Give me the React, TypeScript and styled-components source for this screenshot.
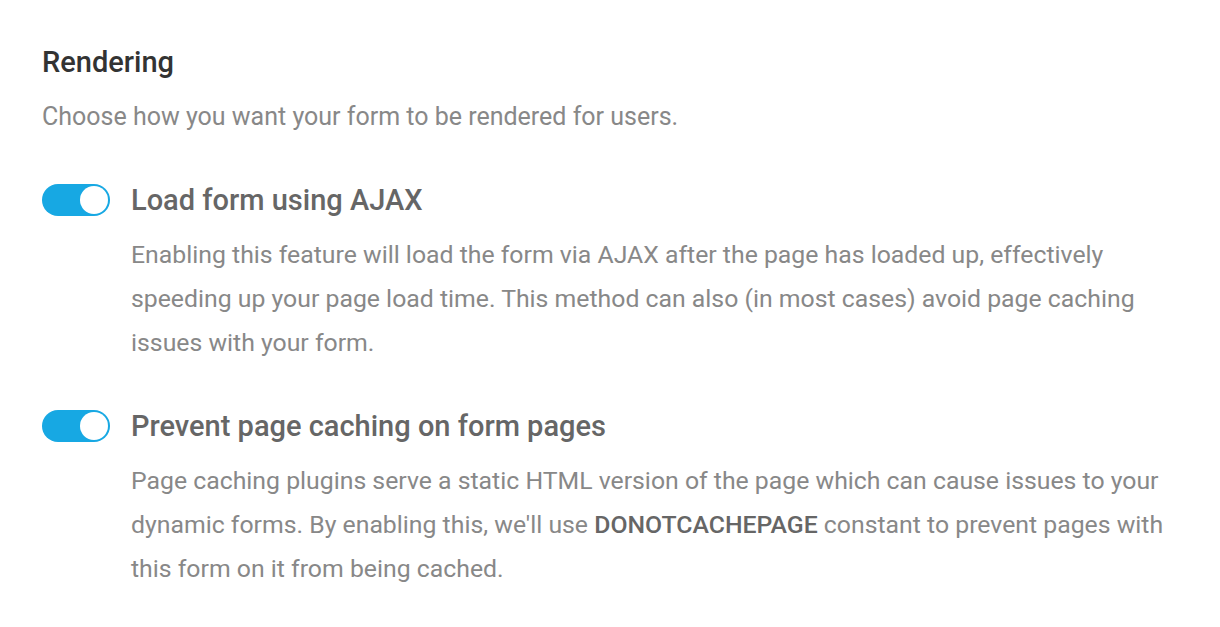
import React from "react";
import styled, { createGlobalStyle } from "styled-components";

const Global = createGlobalStyle`
  html, body { margin: 0; padding: 0; background: #ffffff; }
  body { font-family: Roboto, "Noto Sans", Arial, sans-serif; -webkit-font-smoothing: antialiased; }
`;

const Page = styled.div`
  padding: 44px 42px 40px 42px;
  display: flex;
  flex-direction: column;
`;

const Heading = styled.h2`
  margin: 0;
  font-size: 29px;
  line-height: 36px;
  font-weight: 500;
  color: #333333;
`;

const Subtitle = styled.p`
  margin: 21px 0 0 0;
  font-size: 25px;
  line-height: 32px;
  color: #888888;
`;

const Options = styled.div`
  display: flex;
  flex-direction: column;
  gap: 45px;
  margin-top: 51px;
`;

const Option = styled.div`
  display: flex;
  gap: 21px;
  align-items: flex-start;
`;

const Track = styled.span<{ $on: boolean }>`
  position: relative;
  flex: none;
  width: 68px;
  height: 32px;
  border-radius: 16px;
  background: ${(p) => (p.$on ? "#17a8e3" : "#cccccc")};
`;

const Knob = styled.span<{ $on: boolean }>`
  position: absolute;
  top: 2px;
  left: ${(p) => (p.$on ? "38px" : "2px")};
  width: 28px;
  height: 28px;
  border-radius: 50%;
  background: #ffffff;
`;

const Body = styled.div`
  flex: 1;
  display: flex;
  flex-direction: column;
`;

const Title = styled.div`
  font-size: 29px;
  line-height: 32px;
  font-weight: 500;
  color: #666666;
`;

const Desc = styled.p`
  margin: 17px 0 0 0;
  font-size: 24.8px;
  line-height: 44px;
  color: #888888;

  strong {
    font-weight: 500;
    color: #666666;
  }
`;

const Toggle = ({ on }: { on: boolean }) => (
  <Track $on={on} role="switch" aria-checked={on}>
    <Knob $on={on} />
  </Track>
);

export default function App() {
  return (
    <>
      <Global />
      <Page>
        <Heading>Rendering</Heading>
        <Subtitle>Choose how you want your form to be rendered for users.</Subtitle>
        <Options>
          <Option>
            <Toggle on />
            <Body>
              <Title>Load form using AJAX</Title>
              <Desc>
                Enabling this feature will load the form via AJAX after the page has loaded up, effectively
                speeding up your page load time. This method can also (in most cases) avoid page caching
                issues with your form.
              </Desc>
            </Body>
          </Option>
          <Option>
            <Toggle on />
            <Body>
              <Title>Prevent page caching on form pages</Title>
              <Desc>
                Page caching plugins serve a static HTML version of the page which can cause issues to your
                dynamic forms. By enabling this, we'll use <strong>DONOTCACHEPAGE</strong> constant to prevent
                pages with this form on it from being cached.
              </Desc>
            </Body>
          </Option>
        </Options>
      </Page>
    </>
  );
}
